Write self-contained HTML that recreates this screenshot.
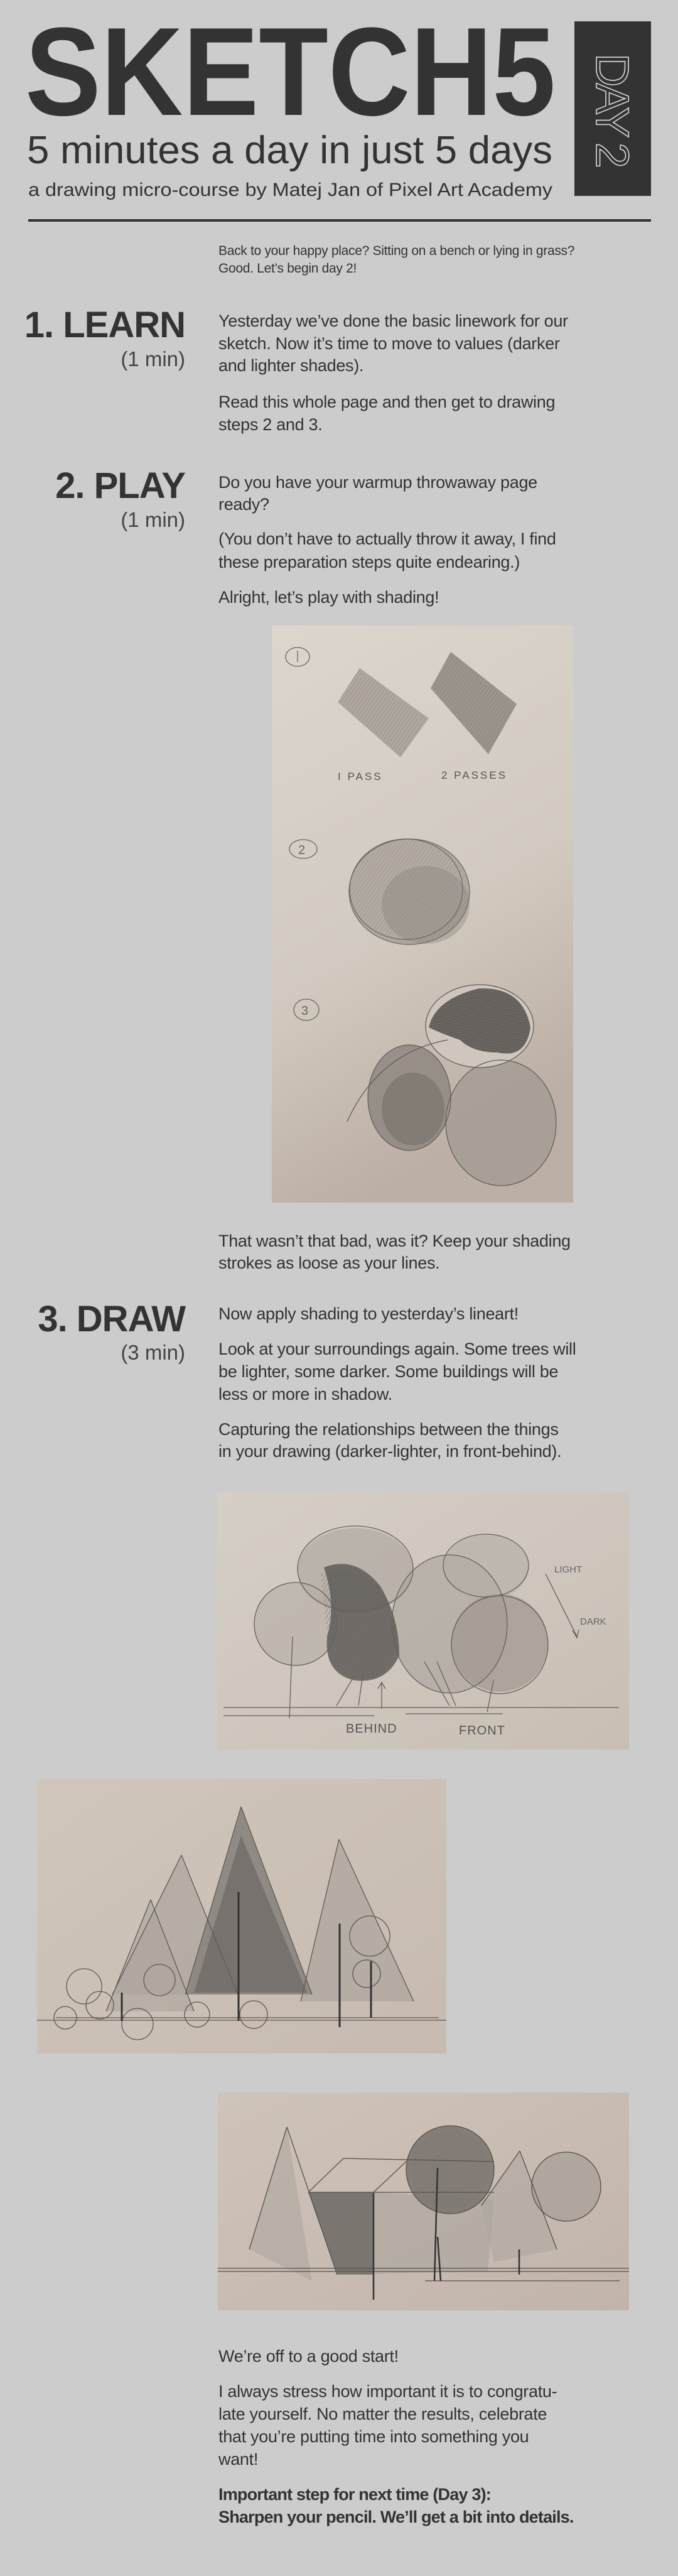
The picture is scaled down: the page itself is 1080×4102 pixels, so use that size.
<!DOCTYPE html>
<html><head><meta charset="utf-8">
<style>
html,body{margin:0;padding:0;}
body{width:1080px;height:4102px;background:#cccccc;position:relative;overflow:hidden;font-family:"Liberation Sans",sans-serif;color:#333;}
.a{position:absolute;}
.p{position:absolute;left:348px;font-size:27px;line-height:36px;white-space:nowrap;color:#333;letter-spacing:-0.3px;}
.h{position:absolute;right:785px;text-align:right;white-space:nowrap;}
.hb{font-weight:bold;font-size:58px;line-height:58px;letter-spacing:-1px;}
.hm{font-size:33px;line-height:36px;color:#444;}
svg{position:absolute;overflow:hidden;}
</style></head><body>

<svg class="a" style="left:0;top:0" width="1080" height="370">
  <text x="40" y="183" font-family="Liberation Sans" font-weight="bold" font-size="200" fill="#333" textLength="845" lengthAdjust="spacingAndGlyphs">SKETCH5</text>
  <text x="43" y="260" font-family="Liberation Sans" font-size="62" fill="#333" textLength="837" lengthAdjust="spacingAndGlyphs">5 minutes a day in just 5 days</text>
  <text x="45" y="312" font-family="Liberation Sans" font-size="30" fill="#333" textLength="835" lengthAdjust="spacingAndGlyphs">a drawing micro-course by Matej Jan of Pixel Art Academy</text>
  <rect x="915" y="34" width="122" height="278" fill="#333"/>
  <text transform="translate(950,85) rotate(90)" x="0" y="0" font-family="Liberation Sans" font-size="74" fill="none" stroke="#d8d8d8" stroke-width="1.6" textLength="183" lengthAdjust="spacing">DAY 2</text>
  <rect x="45" y="349" width="992" height="4" fill="#333"/>
</svg>

<div class="p" style="top:386px;font-size:21px;line-height:28px;">Back to your happy place? Sitting on a bench or lying in grass?<br>Good. Let’s begin day 2!</div>

<div class="h hb" style="top:489px;">1. LEARN</div>
<div class="h hm" style="top:554px;">(1 min)</div>
<div class="p" style="top:494px;line-height:35.5px;">Yesterday we’ve done the basic linework for our<br>sketch. Now it’s time to move to values (darker<br>and lighter shades).</div>
<div class="p" style="top:623px;line-height:35.5px;">Read this whole page and then get to drawing<br>steps 2 and 3.</div>

<div class="h hb" style="top:745px;">2. PLAY</div>
<div class="h hm" style="top:810px;">(1 min)</div>
<div class="p" style="top:751px;line-height:35px;">Do you have your warmup throwaway page<br>ready?</div>
<div class="p" style="top:840px;line-height:37px;">(You don’t have to actually throw it away, I find<br>these preparation steps quite endearing.)</div>
<div class="p" style="top:933px;">Alright, let’s play with shading!</div>

<svg style="left:433px;top:996px" width="480" height="919" viewBox="0 0 480 919">
  <defs>
    <linearGradient id="g1" x1="0" y1="0" x2="0.3" y2="1"><stop offset="0" stop-color="#dcd6cc"/><stop offset="0.6" stop-color="#d2cac0"/><stop offset="1" stop-color="#bcafa5"/></linearGradient>
    <pattern id="ha" width="5" height="5" patternUnits="userSpaceOnUse" patternTransform="rotate(35)"><line x1="0" y1="0" x2="0" y2="5" stroke="#6a6560" stroke-width="1.3"/></pattern>
    <pattern id="hb" width="4" height="4" patternUnits="userSpaceOnUse" patternTransform="rotate(80)"><line x1="0" y1="0" x2="0" y2="4" stroke="#3a3836" stroke-width="1.6"/></pattern>
  </defs>
  <rect width="480" height="919" fill="url(#g1)"/>
  <g fill="none" stroke="#6a6662" stroke-width="1.3">
    <ellipse cx="41" cy="50" rx="19" ry="15"/><path d="M41 40 v18"/>
    <ellipse cx="50" cy="356" rx="22" ry="15"/><text x="42" y="364" font-size="20" fill="#6a6662" stroke="none">2</text>
    <ellipse cx="55" cy="612" rx="20" ry="17"/><text x="47" y="620" font-size="20" fill="#6a6662" stroke="none">3</text>
  </g>
  <path d="M105 122 L140 68 L250 148 L205 210 Z" fill="#a59e96" opacity="0.8"/>
  <path d="M105 122 L140 68 L250 148 L205 210 Z" fill="url(#ha)" opacity="0.5"/>
  <path d="M253 100 L285 42 L390 125 L345 205 Z" fill="#958e86" opacity="0.9"/>
  <path d="M253 100 L285 42 L390 125 L345 205 Z" fill="url(#ha)" opacity="0.5"/>
  <text x="105" y="246" font-size="17" fill="#555" letter-spacing="3">I PASS</text>
  <text x="270" y="244" font-size="17" fill="#555" letter-spacing="3">2 PASSES</text>
  <ellipse cx="219" cy="424" rx="96" ry="84" fill="#aaa39b" opacity="0.8"/>
  <ellipse cx="245" cy="445" rx="70" ry="62" fill="#8a847e" opacity="0.4"/>
  <ellipse cx="219" cy="424" rx="96" ry="84" fill="url(#ha)" opacity="0.4"/>
  <g fill="none" stroke="#6a6662" stroke-width="1.2">
    <ellipse cx="219" cy="424" rx="96" ry="84"/><ellipse cx="214" cy="420" rx="90" ry="80"/>
  </g>
  <ellipse cx="219" cy="752" rx="66" ry="84" fill="#8e8780" opacity="0.85"/>
  <ellipse cx="225" cy="770" rx="50" ry="58" fill="#6e6964" opacity="0.5"/>
  <ellipse cx="365" cy="792" rx="88" ry="100" fill="#a49c94" opacity="0.85"/>
  <ellipse cx="331" cy="638" rx="86" ry="66" fill="#cfc7bd"/>
  <path d="M250 640 Q260 595 330 578 Q400 575 412 640 Q405 690 360 680 Q320 680 300 660 Q270 650 250 640Z" fill="#5a5652" opacity="0.85"/>
  <path d="M250 640 Q260 595 330 578 Q400 575 412 640 Q405 690 360 680 Q320 680 300 660 Q270 650 250 640Z" fill="url(#hb)" opacity="0.5"/>
  <g fill="none" stroke="#5e5a56" stroke-width="1.2">
    <ellipse cx="331" cy="638" rx="86" ry="66"/><ellipse cx="219" cy="752" rx="66" ry="84"/><ellipse cx="365" cy="792" rx="88" ry="100"/>
    <path d="M120 790 Q170 680 280 660"/>
  </g>
</svg>

<div class="p" style="top:1959px;line-height:35px;">That wasn’t that bad, was it? Keep your shading<br>strokes as loose as your lines.</div>

<div class="h hb" style="top:2072px;">3. DRAW</div>
<div class="h hm" style="top:2136px;">(3 min)</div>
<div class="p" style="top:2074px;">Now apply shading to yesterday’s lineart!</div>
<div class="p" style="top:2130px;">Look at your surroundings again. Some trees will<br>be lighter, some darker. Some buildings will be<br>less or more in shadow.</div>
<div class="p" style="top:2259px;line-height:35px;">Capturing the relationships between the things<br>in your drawing (darker-lighter, in front-behind).</div>

<svg style="left:346px;top:2376px" width="656" height="410" viewBox="0 0 656 410">
  <defs>
    <linearGradient id="g2" x1="0" y1="0" x2="1" y2="1"><stop offset="0" stop-color="#d6cfc6"/><stop offset="1" stop-color="#c8beb4"/></linearGradient>
    <pattern id="hc" width="5" height="5" patternUnits="userSpaceOnUse" patternTransform="rotate(30)"><line x1="0" y1="0" x2="0" y2="5" stroke="#555" stroke-width="1.4"/></pattern>
  </defs>
  <rect width="656" height="410" fill="url(#g2)"/>
  <ellipse cx="220" cy="125" rx="92" ry="68" fill="#aaa39b" opacity="0.6"/>
  <ellipse cx="370" cy="210" rx="92" ry="110" fill="#aaa39b" opacity="0.6"/>
  <ellipse cx="428" cy="120" rx="68" ry="52" fill="#b4ada5" opacity="0.6"/>
  <ellipse cx="450" cy="240" rx="77" ry="78" fill="#9f978f" opacity="0.7"/>
  <ellipse cx="125" cy="210" rx="66" ry="66" fill="#b4ada5" opacity="0.6"/>
  <path d="M170 120 Q220 100 260 150 Q290 200 290 260 Q270 305 220 300 Q170 290 175 230 Q190 180 170 120Z" fill="#5a5652" opacity="0.8"/>
  <path d="M165 130 Q240 110 275 180 Q300 250 260 290 Q210 310 180 270Z" fill="url(#hc)" opacity="0.6"/>
  <g fill="none" stroke="#66615c" stroke-width="1.3">
    <ellipse cx="220" cy="122" rx="92" ry="68"/><ellipse cx="125" cy="210" rx="66" ry="66"/>
    <ellipse cx="370" cy="210" rx="92" ry="110"/><ellipse cx="428" cy="117" rx="68" ry="50"/>
    <ellipse cx="450" cy="243" rx="77" ry="78"/>
    <path d="M10 343 H640 M10 356 H250 M300 353 H455"/>
    <path d="M115 360 L120 230 M190 340 L220 290 M225 340 L232 290 M370 340 L330 270 M380 340 L350 270 M430 350 L440 300"/>
    <path d="M262 345 L262 305 M256 313 L262 303 L268 313"/>
    <path d="M523 130 L573 230 M566 220 L573 232 L576 219"/>
  </g>
  <text x="205" y="383" font-size="20" fill="#555" letter-spacing="1">BEHIND</text>
  <text x="385" y="386" font-size="20" fill="#555" letter-spacing="1">FRONT</text>
  <text x="537" y="128" font-size="15" fill="#666">LIGHT</text>
  <text x="578" y="211" font-size="15" fill="#666">DARK</text>
</svg>

<svg style="left:59px;top:2833px" width="652" height="437" viewBox="0 0 652 437">
  <defs>
    <linearGradient id="g3" x1="0" y1="0" x2="1" y2="1"><stop offset="0" stop-color="#d0c6bc"/><stop offset="1" stop-color="#c7bbb1"/></linearGradient>
    <pattern id="hd" width="5" height="5" patternUnits="userSpaceOnUse" patternTransform="rotate(30)"><line x1="0" y1="0" x2="0" y2="5" stroke="#555" stroke-width="1.4"/></pattern>
  </defs>
  <rect width="652" height="437" fill="url(#g3)"/>
  <path d="M230 121 L120 343 L320 343Z" fill="#aca49c" opacity="0.7"/>
  <path d="M181 192 L110 370 L250 370Z" fill="#aca49c" opacity="0.6"/>
  <path d="M481 96 L420 354 L600 354Z" fill="#aca49c" opacity="0.7"/>
  <path d="M325 44 L236 343 L438 343Z" fill="#8a847e" opacity="0.9"/>
  <path d="M325 90 L250 340 L430 340Z" fill="#5e5a56" opacity="0.5"/>
  <g fill="none" stroke="#5e5a56" stroke-width="1.3">
    <path d="M230 121 L120 343 M230 121 L320 343 M325 44 L236 343 M325 44 L438 343 M481 96 L420 354 M481 96 L600 354 M181 192 L110 370 M181 192 L250 370"/>
    <path d="M0 384 H652 M30 380 H640"/>
    <circle cx="75" cy="330" r="28"/><circle cx="100" cy="360" r="22"/><circle cx="160" cy="390" r="25"/><circle cx="195" cy="320" r="25"/>
    <circle cx="530" cy="250" r="32"/><circle cx="525" cy="310" r="22"/><circle cx="45" cy="380" r="18"/><circle cx="255" cy="375" r="20"/><circle cx="345" cy="375" r="22"/>
  </g>
  <path d="M321 180 V385 M482 230 V395 M532 290 V380 M135 340 V385" stroke="#333" stroke-width="3" fill="none"/>
</svg>

<svg style="left:347px;top:3332px" width="655" height="347" viewBox="0 0 655 347">
  <defs>
    <linearGradient id="g4" x1="0" y1="0" x2="1" y2="1"><stop offset="0" stop-color="#cfc4ba"/><stop offset="1" stop-color="#c2b4ab"/></linearGradient>
    <pattern id="he" width="5" height="5" patternUnits="userSpaceOnUse" patternTransform="rotate(30)"><line x1="0" y1="0" x2="0" y2="5" stroke="#555" stroke-width="1.4"/></pattern>
  </defs>
  <rect width="655" height="347" fill="url(#g4)"/>
  <path d="M110 55 L50 250 L150 300 Z" fill="#aea69e" opacity="0.6"/>
  <path d="M144 159 L248 159 L440 170 L430 285 L190 290 Z" fill="#aea69e" opacity="0.7"/>
  <path d="M144 159 L248 159 L248 290 L190 290 Z" fill="#706b66" opacity="0.85"/>
  <path d="M481 93 L420 180 L440 270 L540 250 Z" fill="#aea69e" opacity="0.6"/>
  <circle cx="555" cy="150" r="55" fill="#a69e96" opacity="0.7"/>
  <circle cx="370" cy="123" r="70" fill="#79736d" opacity="0.85"/>
  <circle cx="370" cy="123" r="62" fill="url(#he)" opacity="0.4"/>
  <g fill="none" stroke="#55514d" stroke-width="1.3">
    <path d="M110 55 L190 290 M110 55 L50 250 M144 159 L200 105 L440 110 M248 159 L300 110 M144 159 L440 159 M481 93 L420 180 M481 93 L540 250"/>
    <circle cx="370" cy="123" r="70"/><circle cx="555" cy="150" r="55"/>
    <path d="M0 280 H655 M0 285 H655 M330 300 H640"/>
  </g>
  <path d="M248 160 V330 M350 230 L355 300 M350 120 L345 300 M480 250 V290" stroke="#333" stroke-width="2.5" fill="none"/>
</svg>

<div class="p" style="top:3734px;">We’re off to a good start!</div>
<div class="p" style="top:3790px;">I always stress how important it is to congratu-<br>late yourself. No matter the results, celebrate<br>that you’re putting time into something you<br>want!</div>
<div class="p" style="top:3954px;font-weight:bold;letter-spacing:-0.8px;">Important step for next time (Day 3):<br>Sharpen your pencil. We’ll get a bit into details.</div>

</body></html>
